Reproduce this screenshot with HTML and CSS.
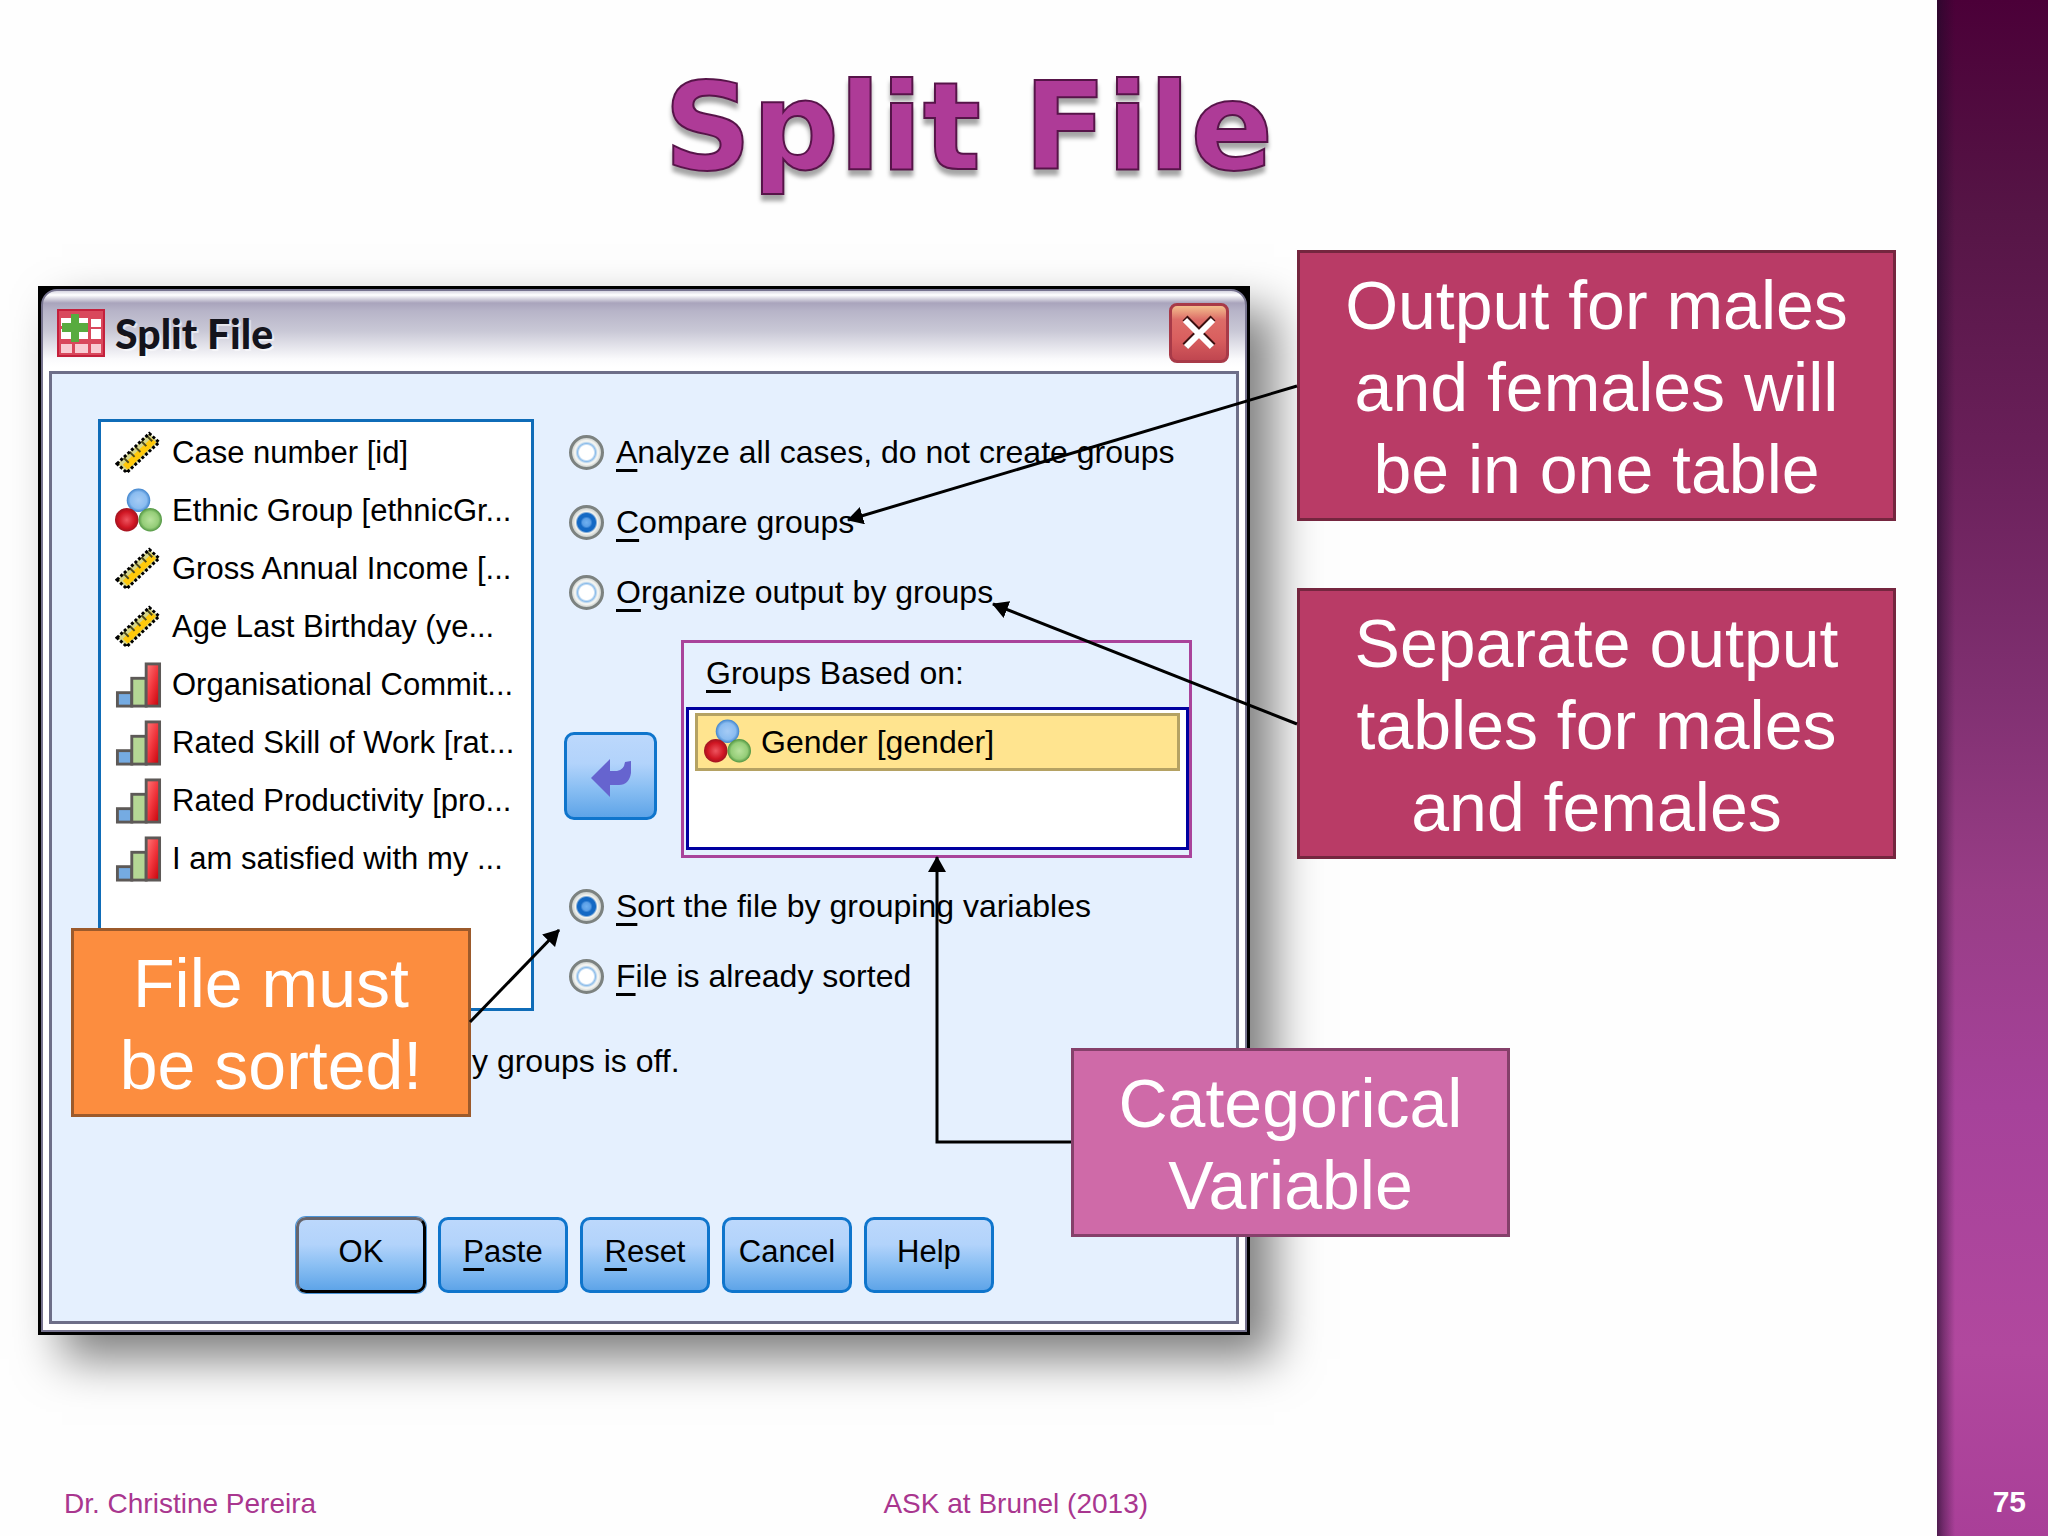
FILE: index.html
```
<!DOCTYPE html>
<html lang="en">

    <head>

        <meta charset="utf-8">
        <title>Split File</title>

        <link rel="stylesheet" href="styles.css">

    </head>

    <body>

        <!-- icons for the variable types -->
        <svg class="defs" width="0" height="0" aria-hidden="true">
            <defs>
                <linearGradient id="red" x1="0" y1="0" x2="1" y2="1">
                    <stop offset="0" stop-color="#ff7a7a"/>
                    <stop offset=".5" stop-color="#f0353c"/>
                    <stop offset="1" stop-color="#c40008"/>
                </linearGradient>
                <radialGradient id="ballBlue"><stop offset="0" stop-color="#a5cbf5"/><stop offset=".7" stop-color="#8abcf0"/><stop offset="1" stop-color="#3f83cc"/></radialGradient>
                <radialGradient id="ballRed"><stop offset="0" stop-color="#ee5560"/><stop offset=".7" stop-color="#cf1522"/><stop offset="1" stop-color="#a01420"/></radialGradient>
                <radialGradient id="ballGreen"><stop offset="0" stop-color="#b8e29c"/><stop offset=".7" stop-color="#95cd78"/><stop offset="1" stop-color="#4f9440"/></radialGradient>
            </defs>
            <symbol id="scale" viewBox="0 0 48 44">
                <path d="M2 33 L35 2 L45 11 L12 42 Z" fill="#d6d68a"/>
                <path d="M8 34 L37 7 L42 11 L13 39 Z" fill="#ffc90a"/>
                <path d="M9 27 L14 32 M15 21 L20 26 M21 16 L26 21 M27 10 L32 15 M33 5 L38 10" stroke="#4d4a1c" stroke-width="2" fill="none"/>
                <path d="M2 33 L35 2 L45 11 L12 42 Z" fill="none" stroke="#000" stroke-width="3" stroke-dasharray="3 2"/>
            </symbol>
            <symbol id="nominal" viewBox="0 0 48 44">
                <circle cx="24" cy="11" r="12" fill="url(#ballBlue)"/>
                <circle cx="12" cy="31" r="12" fill="url(#ballRed)"/>
                <circle cx="36" cy="31" r="12" fill="url(#ballGreen)"/>
            </symbol>
            <symbol id="ordinal" viewBox="0 0 48 48">
                <rect x="2" y="32" width="15" height="14" fill="#75abe2" stroke="#5d5957" stroke-width="3"/>
                <rect x="17" y="17" width="15" height="29" fill="#b5d795" stroke="#5d5957" stroke-width="3"/>
                <rect x="32" y="2" width="14" height="44" fill="url(#red)" stroke="#5d5957" stroke-width="3"/>
            </symbol>
        </svg>

        <main class="slide">

            <h1 class="title">Split File</h1>

            <div class="stage">

                <section class="window">
                    <div class="frame">

                        <header class="titlebar">
                            <svg class="app-icon" viewBox="0 0 48 48" aria-hidden="true">
                                <rect x="1" y="1" width="46" height="46" fill="#d9485c" stroke="#c4203c" stroke-width="2"/>
                                <path d="M4 9h27v8H4zM34 10h10v8H34zM4 20h11v10H4zM18 20h13v10H18zM34 20h10v10H34z" fill="#fff"/>
                                <path d="M4 35h11v9H4zM18 35h13v9H18zM34 35h10v9H34z" fill="#f9ccd3"/>
                                <path d="M14 5h8v9h9v9h-9v10h-8V23H5v-9h9z" fill="#58ab3f"/>
                            </svg>
                            <h2 class="caption">Split File</h2>
                            <button class="close" type="button" aria-label="Close">
                                <svg viewBox="0 0 36 36" aria-hidden="true">
                                    <path d="M4 3 L32 31 M32 3 L4 31" stroke="#3b1010" stroke-width="7"/>
                                    <path d="M4 5 L31 32 M32 5 L5 32" stroke="#fff" stroke-width="6"/>
                                </svg>
                            </button>
                        </header>

                        <form class="content">

                            <div class="panes">

                                <ul class="variables" aria-label="Variables">
                                    <li><svg><use href="#scale"/></svg>Case number [id]</li>
                                    <li><svg><use href="#nominal"/></svg>Ethnic Group [ethnicGr...</li>
                                    <li><svg><use href="#scale"/></svg>Gross Annual Income [...</li>
                                    <li><svg><use href="#scale"/></svg>Age Last Birthday (ye...</li>
                                    <li><svg><use href="#ordinal"/></svg>Organisational Commit...</li>
                                    <li><svg><use href="#ordinal"/></svg>Rated Skill of Work [rat...</li>
                                    <li><svg><use href="#ordinal"/></svg>Rated Productivity [pro...</li>
                                    <li><svg><use href="#ordinal"/></svg>I am satisfied with my ...</li>
                                </ul>

                                <div class="options">

                                    <div class="radios">
                                        <label><input type="radio" name="split"><span><u>A</u>nalyze all cases, do not create groups</span></label>
                                        <label><input type="radio" name="split" checked><span><u>C</u>ompare groups</span></label>
                                        <label><input type="radio" name="split"><span><u>O</u>rganize output by groups</span></label>
                                    </div>

                                    <div class="move-row">
                                        <button class="btn move" type="button" aria-label="Move variable">
                                            <svg viewBox="0 0 42 38" aria-hidden="true">
                                                <path d="M1 19 L20 0 V12 H27 Q34 11 35 3 L41 2 V14 Q39 26 29 26 H20 V38 Z" fill="#6664cf"/>
                                            </svg>
                                        </button>
                                        <div class="groups">
                                            <div class="groups-label" id="groups-label"><u>G</u>roups Based on:</div>
                                            <ul class="groups-list" aria-labelledby="groups-label">
                                                <li><svg><use href="#nominal"/></svg>Gender [gender]</li>
                                            </ul>
                                        </div>
                                    </div>

                                    <div class="radios">
                                        <label><input type="radio" name="sort" checked><span><u>S</u>ort the file by grouping variables</span></label>
                                        <label><input type="radio" name="sort"><span><u>F</u>ile is already sorted</span></label>
                                    </div>

                                </div>

                            </div>

                            <p class="status">y groups is off.</p>

                            <div class="buttons">
                                <button class="btn default" type="button">OK</button>
                                <button class="btn" type="button"><u>P</u>aste</button>
                                <button class="btn" type="button"><u>R</u>eset</button>
                                <button class="btn" type="button">Cancel</button>
                                <button class="btn" type="button">Help</button>
                            </div>

                        </form>

                    </div>
                </section>

                <div class="notes">
                    <p class="note">Output for males<br>and females will<br>be in one table</p>
                    <p class="note">Separate output<br>tables for males<br>and females</p>
                </div>

                <p class="note sorted">File must<br>be sorted!</p>
                <p class="note categorical">Categorical<br>Variable</p>

                <svg class="arrows" aria-hidden="true">
                    <defs>
                        <marker id="head" viewBox="0 0 16 18" markerWidth="16" markerHeight="18" refX="15" refY="9" orient="auto" markerUnits="userSpaceOnUse">
                            <path d="M0 0 L16 9 L0 18 Z"/>
                        </marker>
                    </defs>
                    <path d="M1297 136 L848 270" marker-end="url(#head)"/>
                    <path d="M1297 474 L993 354" marker-end="url(#head)"/>
                    <path d="M470 772 L559 680" marker-end="url(#head)"/>
                    <path d="M1071 892 H937 V607" marker-end="url(#head)"/>
                </svg>

            </div>

            <footer class="foot">
                <span>Dr. Christine Pereira</span>
                <span>ASK at Brunel (2013)</span>
            </footer>

        </main>

        <aside class="band">75</aside>

    </body>

</html>
```

FILE: styles.css
```
* {

    box-sizing: border-box;

}

body {

    margin: 0;
    min-height: 100vh;
    display: flex;
    background-color: #fefefe;
    font-family: "Liberation Sans", Arial, Helvetica, sans-serif;

}

h1, h2, p, ul {

    margin: 0;
    padding: 0;
    list-style: none;

}

.defs {

    position: absolute;

}

.slide {

    flex: 1;
    display: flex;
    flex-direction: column;

}

.title {

    height: 250px;
    padding-top: 51px;
    text-align: center;
    font-family: "DejaVu Sans", "Arial Black", sans-serif;
    font-weight: bold;
    font-size: 122px;
    line-height: 152px;
    color: #ae3b97;
    -webkit-text-stroke: 2px #571449;
    filter: drop-shadow(0 6px 2px rgba(0, 0, 0, .35));

}

.stage {

    position: relative;
    display: grid;
    grid-template-columns: 1212fr 599fr;
    column-gap: 47px;
    align-items: start;
    padding: 0 41px 0 38px;

}

/* dialog window */

.window {

    margin-top: 36px;
    padding: 3px;
    background-color: #000;
    box-shadow: 24px 24px 44px rgba(0, 0, 0, .5);

}

.frame {

    padding: 0 6px 6px;
    border: 2px solid #77748f;
    border-radius: 16px 16px 0 0;
    background: linear-gradient(#d8d6e2 0, #fff 4px, #a9a4bc 12px, #b7b4c8 20px, #c9c8d6 40px, #fafafc 68px, #fff 76px) #fff;

}

.titlebar {

    display: flex;
    align-items: center;
    gap: 10px;
    height: 80px;
    padding: 4px 10px 0 8px;

}

.app-icon {

    width: 48px;
    height: 48px;

}

.caption {

    flex: 1;
    font-family: Lato, sans-serif;
    font-weight: 900;
    font-size: 41px;
    color: #14141c;
    text-shadow: 2px 2px 1px rgba(255, 255, 255, .6);

}

.close {

    display: grid;
    place-items: center;
    width: 60px;
    height: 60px;
    padding: 0;
    border: 3px solid #a83a48;
    border-radius: 8px;
    background: linear-gradient(#f3bf8d, #dd6d68 25%, #d95f5f 60%, #c04650);

}

.close svg {

    width: 36px;
    height: 36px;

}

.content {

    padding: 45px 44px 28px 46px;
    border: 3px solid #6d6e88;
    background-color: #e5f0fe;
    font-size: 31px;
    line-height: 36px;

}

.content svg {

    flex: none;

}

.panes {

    display: grid;
    grid-template-columns: 436fr 628fr;
    column-gap: 30px;

}

.variables {

    min-height: 592px;
    padding: 2px 0 0 14px;
    border: 3px solid #0f6cb8;
    background-color: #fff;

}

.variables li, .groups-list li {

    display: flex;
    align-items: center;
    gap: 10px;
    height: 58px;
    white-space: nowrap;

}

.variables svg, .groups-list svg {

    width: 47px;
    height: 46px;

}

.options, .status {

    font-size: 32px;

}

.options {

    padding-top: 15px;

}

.radios {

    display: grid;
    gap: 34px;
    padding-left: 5px;

}

.radios label {

    display: flex;
    align-items: center;
    gap: 12px;
    white-space: nowrap;

}

.radios input {

    appearance: none;
    flex: none;
    width: 35px;
    height: 35px;
    margin: 0;
    border: 3px solid #7c8280;
    border-radius: 50%;
    background: radial-gradient(circle, #fff 0, #fff 7px, #8dbdea 9px, #eef2f2 11px, #f4f4f0 12px, #c4cac8 15px);

}

.radios input:checked {

    background: radial-gradient(circle, #6fb0f0 0, #5b9fe6 4px, #1469c4 6px, #1469c4 9px, #f4f4f0 11px, #c4cac8 15px);

}

u {

    text-decoration-thickness: 3px;
    text-underline-offset: 6px;
    text-decoration-skip-ink: none;

}

.move-row {

    display: flex;
    align-items: flex-end;
    gap: 24px;
    margin: 30px 0;

}

.btn {

    width: 130px;
    height: 76px;
    padding: 0 0 6px;
    border: 3px solid #0f75cc;
    border-radius: 10px;
    background: linear-gradient(#bcd8fc, #b2d3fb 35%, #8abff3 65%, #5ea4e8);
    color: #000;
    font: inherit;

}

.btn.default {

    border-color: #66656d #000 #000 #66656d;
    box-shadow: 0 0 0 1px #4a94d8;

}

.btn.move {

    display: grid;
    place-items: center;
    width: 93px;
    height: 88px;
    margin-bottom: 38px;
    padding: 4px 0 0;

}

.move svg {

    width: 42px;
    height: 38px;

}

.groups {

    flex: 1;
    padding: 0 0 5px 2px;
    border: 3px solid #a9439b;

}

.groups-label {

    padding: 12px 20px 16px;

}

.groups-list {

    min-height: 143px;
    padding: 3px 6px;
    border: 3px solid #0000a0;
    background-color: #fff;

}

.groups-list li {

    padding-left: 6px;
    border: 3px solid #b5a263;
    background-color: #ffe48f;

}

.status {

    margin-top: 32px;
    padding-left: 374px;

}

.buttons {

    display: flex;
    justify-content: center;
    gap: 12px;
    margin-top: 138px;

}

/* callouts over the dialog */

.notes {

    display: grid;
    gap: 67px;

}

.note {

    padding: 11px 0 8px;
    border: 3px solid #75263f;
    background-color: #b93b66;
    color: #fff;
    text-align: center;
    font-size: 68px;
    line-height: 82px;

}

.sorted {

    position: absolute;
    left: 71px;
    top: 678px;
    width: 400px;
    border-color: #9c5a2b;
    background-color: #fc8d3f;

}

.categorical {

    position: absolute;
    left: 1071px;
    top: 798px;
    width: 439px;
    border-color: #85406a;
    background-color: #cf6aa8;

}

.arrows {

    position: absolute;
    left: 0;
    top: 0;
    width: 100%;
    height: 100%;
    fill: none;
    stroke: #000;
    stroke-width: 3px;
    pointer-events: none;

}

.arrows marker path {

    fill: #000;
    stroke: none;

}

.foot {

    display: grid;
    grid-template-columns: 7fr 9fr;
    margin-top: auto;
    padding: 0 0 16px 64px;
    font-size: 28px;
    line-height: 32px;
    color: #a9368f;

}

.band {

    display: flex;
    align-items: flex-end;
    justify-content: flex-end;
    width: 111px;
    padding: 0 22px 18px 0;
    background: linear-gradient(90deg, rgba(30, 10, 40, .65), rgba(30, 10, 40, .4) 6px, transparent 18px),
        linear-gradient(#4b0038, #561546 14%, #6a205a 30%, #803071 45%, #983d86 58%, #a6429a 72%, #b1489e 88%, #a93f98);
    color: #fff;
    font-size: 30px;
    font-weight: bold;
    line-height: 32px;

}
```
